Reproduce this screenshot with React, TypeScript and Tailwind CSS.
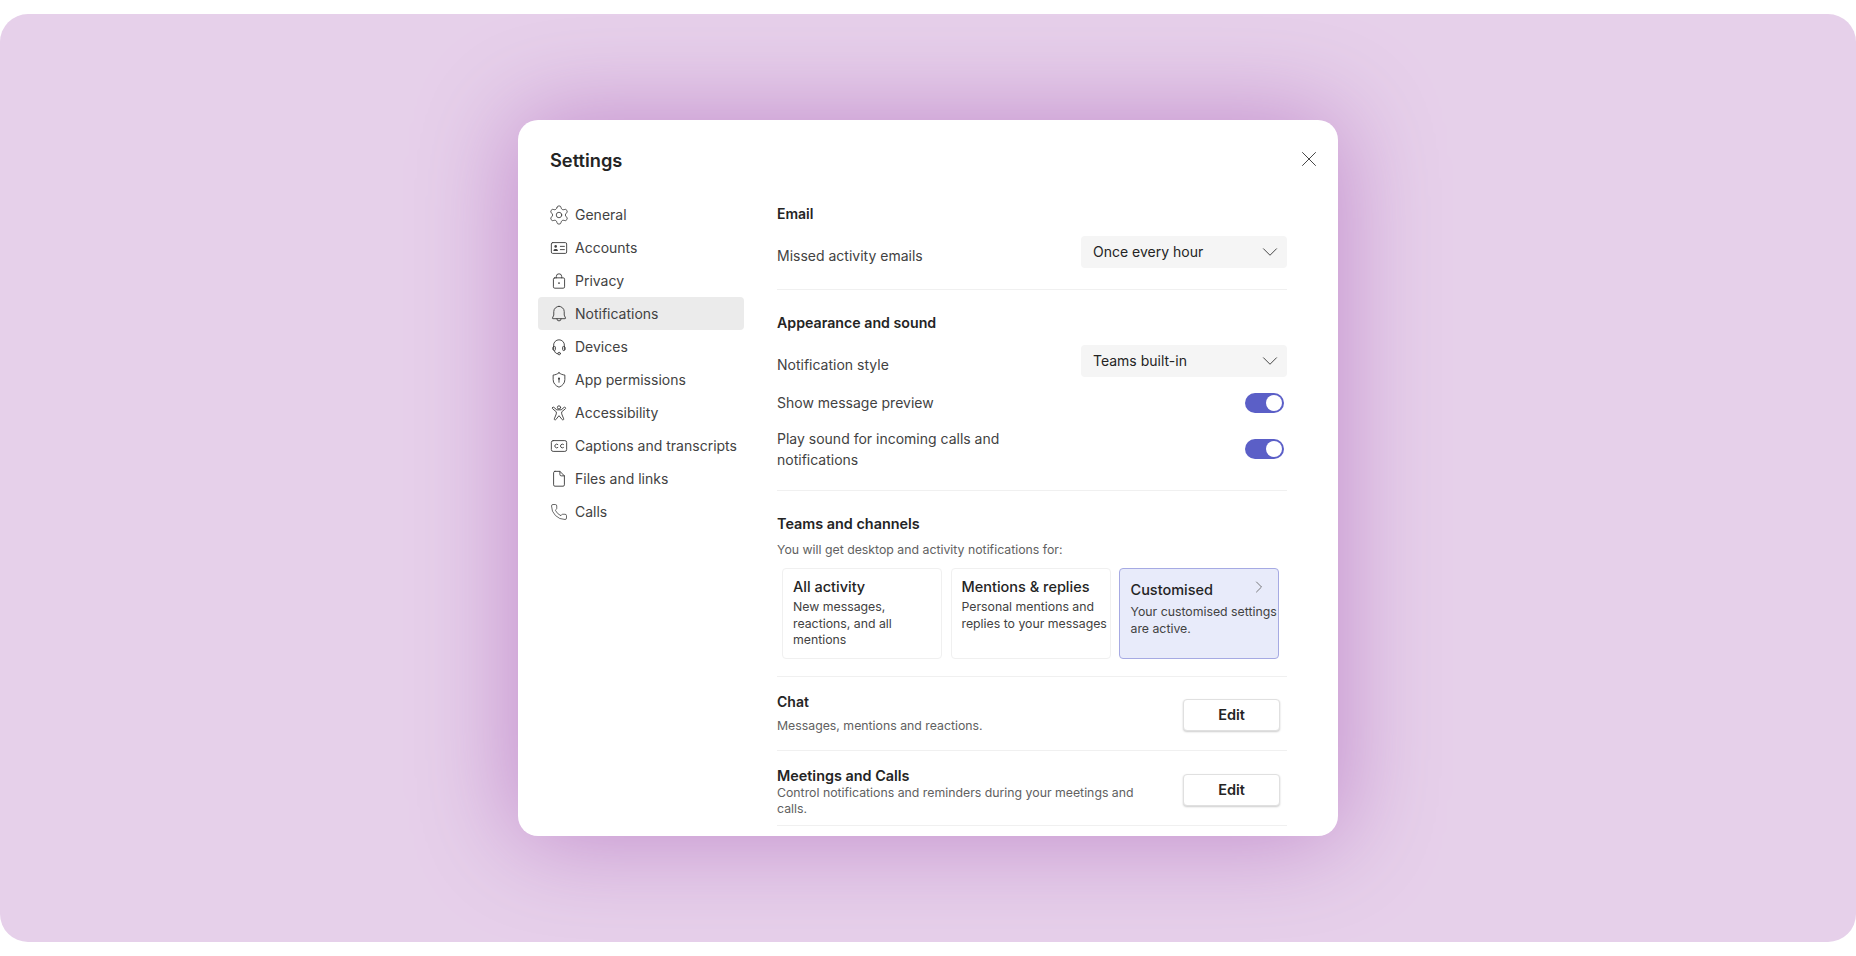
import React from "react";
import { ChevronDown, ChevronRight, Phone, Settings, X } from "lucide-react";

const Ico: React.FC<{ children: React.ReactNode }> = ({ children }) => (
  <svg
    width="18"
    height="18"
    viewBox="0 0 20 20"
    fill="none"
    stroke="#424242"
    strokeWidth="1.05"
    strokeLinecap="round"
    strokeLinejoin="round"
    className="shrink-0"
  >
    {children}
  </svg>
);

const navItems: { label: string; icon: React.ReactNode }[] = [
  { label: "General", icon: <Settings size={22} strokeWidth={0.95} color="#424242" className="shrink-0" /> },
  {
    label: "Accounts",
    icon: (
      <Ico>
        <rect x="1.5" y="4" width="17" height="12" rx="1.5" />
        <circle cx="6.3" cy="8.2" r="1.4" fill="#424242" stroke="none" />
        <path d="M3.8 13.2c0-1.5 1-2.2 2.5-2.2s2.5.7 2.5 2.2z" fill="#424242" stroke="none" />
        <path d="M11.5 8.2h4.5M11.5 11.8h4.5" />
      </Ico>
    ),
  },
  {
    label: "Privacy",
    icon: (
      <Ico>
        <rect x="3.8" y="6.5" width="12.4" height="11.5" rx="1.5" />
        <path d="M7 6.5V5a3 3 0 0 1 6 0v1.5" />
        <circle cx="10" cy="12.3" r="1" fill="#424242" stroke="none" />
      </Ico>
    ),
  },
  {
    label: "Notifications",
    icon: (
      <Ico>
        <path d="M10 1.500a5.800 5.800 0 0 0-5.800 5.800v3.900L2.700 14.600c-.1.3.1.6.5.6h13.600c.4 0 .6-.3.5-.6l-1.500-3.400V7.300A5.800 5.800 0 0 0 10 1.500z" />
        <path d="M7.600 15.300a2.400 2.400 0 0 0 4.800 0" />
      </Ico>
    ),
  },
  {
    label: "Devices",
    icon: (
      <Ico>
        <path d="M4 13V8a6 6 0 0 1 12 0v5" />
        <path d="M4 9.500c-.9.500-1 1.300-1 2.300 0 1.200.6 2.200 1.800 2.200.7 0 1.200-.5 1.200-1.200v-2.600C6 9.300 5 9 4 9.500z" />
        <path d="M16 9.500c.9.500 1 1.300 1 2.300 0 1.200-.6 2.200-1.800 2.200-.7 0-1.200-.5-1.200-1.200v-2.600c0-.9 1-1.200 2-.7z" />
        <path d="M5 14.500c.4 2 2 3 3.700 3" />
        <circle cx="10.200" cy="17.300" r="1.400" />
      </Ico>
    ),
  },
  {
    label: "App permissions",
    icon: (
      <Ico>
        <path d="M10 2c2 1.500 4 2.300 6.500 2.500v5c0 4-2.400 6.800-6.500 8.500-4.100-1.700-6.500-4.500-6.500-8.500v-5C6 4.300 8 3.500 10 2z" />
        <circle cx="10" cy="8.500" r="1.200" fill="#424242" stroke="none" />
        <path d="M10 9.500v3" />
      </Ico>
    ),
  },
  {
    label: "Accessibility",
    icon: (
      <Ico>
        <circle cx="10" cy="3.800" r="1.800" />
        <path d="M3 3.800c-.6.500-.5 1.100 0 1.600l4 3.300v2.300L4.800 16.500c-.3 1 .9 1.700 1.600.9L10 13l3.600 4.400c.7.800 1.900.1 1.600-.9L13 11V8.700l4-3.300c.5-.5.6-1.100 0-1.600-.5-.4-1-.3-1.400 0l-3.200 2.700H7.600L4.400 3.800c-.4-.3-.9-.4-1.400 0z" />
      </Ico>
    ),
  },
  {
    label: "Captions and transcripts",
    icon: (
      <Ico>
        <rect x="1.500" y="4" width="17" height="12" rx="2" />
        <path d="M8.700 8.300a2.100 2.100 0 1 0 0 3.400M15 8.300a2.100 2.100 0 1 0 0 3.400" />
      </Ico>
    ),
  },
  {
    label: "Files and links",
    icon: (
      <Ico>
        <path d="M5.500 1.500h5.500l5 5v10a1.500 1.500 0 0 1-1.500 1.500h-9A1.500 1.500 0 0 1 4 16.500V3A1.500 1.500 0 0 1 5.500 1.500z" />
        <path d="M11 1.500V5a1.500 1.500 0 0 0 1.500 1.500H16" />
      </Ico>
    ),
  },
  { label: "Calls", icon: <Phone size={18} strokeWidth={1.05} color="#424242" className="shrink-0" /> },
];

const Select: React.FC<{ value: string }> = ({ value }) => (
  <div className="flex h-[32px] w-[206px] items-center justify-between rounded bg-[#f5f5f5] pl-[12px] pr-[4px] text-sm text-[#242424]">
    <span>{value}</span>
    <ChevronDown size={26} strokeWidth={0.9} color="#424242" />
  </div>
);

const Toggle: React.FC = () => (
  <div className="mr-[3px] flex h-[20px] w-[39px] items-center justify-end rounded-full bg-[#5b5fc7] pr-[2px]">
    <div className="h-[16px] w-[16px] rounded-full bg-white" />
  </div>
);

const EditButton: React.FC = () => (
  <button className="mr-[7px] h-[32px] w-[97px] rounded border border-[#e0e0e0] bg-white text-[14.5px] font-semibold text-[#242424] shadow-[0_1px_2px_rgba(0,0,0,0.2)]">
    Edit
  </button>
);

const Divider: React.FC<{ className: string }> = ({ className }) => (
  <div className={`h-px bg-[#f0f0f0] ${className}`} />
);

const PlanCard: React.FC<{ title: string; children: React.ReactNode }> = ({ title, children }) => (
  <div className="h-[91px] w-[160px] rounded border border-[#f0f0f0] pl-[10px] pt-[8px]">
    <div className="text-[14.5px] font-medium leading-5 text-[#242424]">{title}</div>
    <div className="mt-[2px] text-[12.3px] leading-[16.5px] text-[#424242]">{children}</div>
  </div>
);

export default function App() {
  return (
    <div className="h-[956px] w-[1856px] overflow-hidden bg-white pt-[14px] font-[Inter,sans-serif]">
      <div className="h-[928px] overflow-hidden rounded-[28px] bg-[#e6d0ea] pt-[106px]">
        <div className="mx-auto h-[716px] w-[820px] overflow-hidden rounded-[20px] bg-white shadow-[0_0_100px_4px_#c28ccc]">
          {/* header */}
          <div className="flex h-[78px] items-start justify-between pl-[32px] pr-[16px] pt-[26px]">
            <h1 className="text-[18.25px] font-semibold leading-7 text-[#242424]">Settings</h1>
            <X size={26} strokeWidth={0.9} color="#424242" />
          </div>

          <div className="flex">
            {/* sidebar */}
            <nav className="ml-[20px] w-[206px]">
              {navItems.map((item) => (
                <div
                  key={item.label}
                  className={`flex h-[33px] items-center gap-[7px] rounded pl-[12px] text-sm text-[#424242] ${
                    item.label === "Notifications" ? "bg-[#ebebeb]" : ""
                  }`}
                >
                  <span className="flex w-[18px] justify-center">{item.icon}</span>
                  <span>{item.label}</span>
                </div>
              ))}
            </nav>

            {/* content */}
            <div className="ml-[33px] w-[510px] pt-[6px]">
              <h2 className="text-sm font-semibold leading-5 text-[#242424]">Email</h2>
              <div className="mt-[12px] flex items-center justify-between">
                <span className="mt-[8px] text-sm leading-5 text-[#424242]">Missed activity emails</span>
                <Select value="Once every hour" />
              </div>
              <Divider className="mt-[21px]" />

              <h2 className="mt-[23px] text-[14.2px] font-semibold leading-5 text-[#242424]">Appearance and sound</h2>
              <div className="mt-[12px] flex items-center justify-between">
                <span className="mt-[8px] text-sm leading-5 text-[#424242]">Notification style</span>
                <Select value="Teams built-in" />
              </div>
              <div className="mt-[16px] flex items-center justify-between">
                <span className="text-sm leading-5 text-[#424242]">Show message preview</span>
                <Toggle />
              </div>
              <div className="mt-[15px] flex items-center justify-between">
                <span className="w-[240px] text-sm leading-[21px] text-[#424242]">
                  Play sound for incoming calls and notifications
                </span>
                <Toggle />
              </div>
              <Divider className="mt-[20px]" />

              <h2 className="mt-[23px] text-[14.4px] font-semibold leading-5 text-[#242424]">Teams and channels</h2>
              <p className="mt-[8px] text-[12.3px] leading-4 text-[#616161]">
                You will get desktop and activity notifications for:
              </p>
              <div className="ml-[5px] mt-[10px] flex gap-[8.5px]">
                <PlanCard title="All activity">
                  New messages,
                  <br />
                  reactions, and all
                  <br />
                  mentions
                </PlanCard>
                <PlanCard title="Mentions & replies">
                  Personal mentions and
                  <br />
                  replies to your messages
                </PlanCard>
                <div className="h-[91px] w-[160px] rounded border border-[#a6aae3] bg-[#e8ebfa] pl-[10.5px] pt-[11px]">
                  <div className="flex items-start justify-between pr-[9px]">
                    <span className="text-[14.5px] font-medium leading-5 text-[#242424]">Customised</span>
                    <ChevronRight size={20} strokeWidth={1} color="#616161" className="-mt-[3px]" />
                  </div>
                  <div className="mt-[4px] whitespace-nowrap text-[12.3px] leading-[16.5px] text-[#424242]">
                    Your customised settings
                    <br />
                    are active.
                  </div>
                </div>
              </div>
              <Divider className="mt-[17px]" />

              <div className="flex h-[73px] justify-between">
                <div className="pt-[15px]">
                  <div className="text-sm font-semibold leading-5 text-[#242424]">Chat</div>
                  <div className="mt-[6px] text-[12.3px] leading-4 text-[#616161]">
                    Messages, mentions and reactions.
                  </div>
                </div>
                <div className="pt-[22px]">
                  <EditButton />
                </div>
              </div>
              <Divider className="" />

              <div className="flex h-[74px] justify-between">
                <div className="w-[370px] pt-[15px]">
                  <div className="text-[14.4px] font-semibold leading-5 text-[#242424]">Meetings and Calls</div>
                  <div className="-mt-[1px] text-[12.3px] leading-4 text-[#616161]">
                    Control notifications and reminders during your meetings and calls.
                  </div>
                </div>
                <div className="pt-[23px]">
                  <EditButton />
                </div>
              </div>
              <Divider className="" />
            </div>
          </div>
        </div>
      </div>
    </div>
  );
}
